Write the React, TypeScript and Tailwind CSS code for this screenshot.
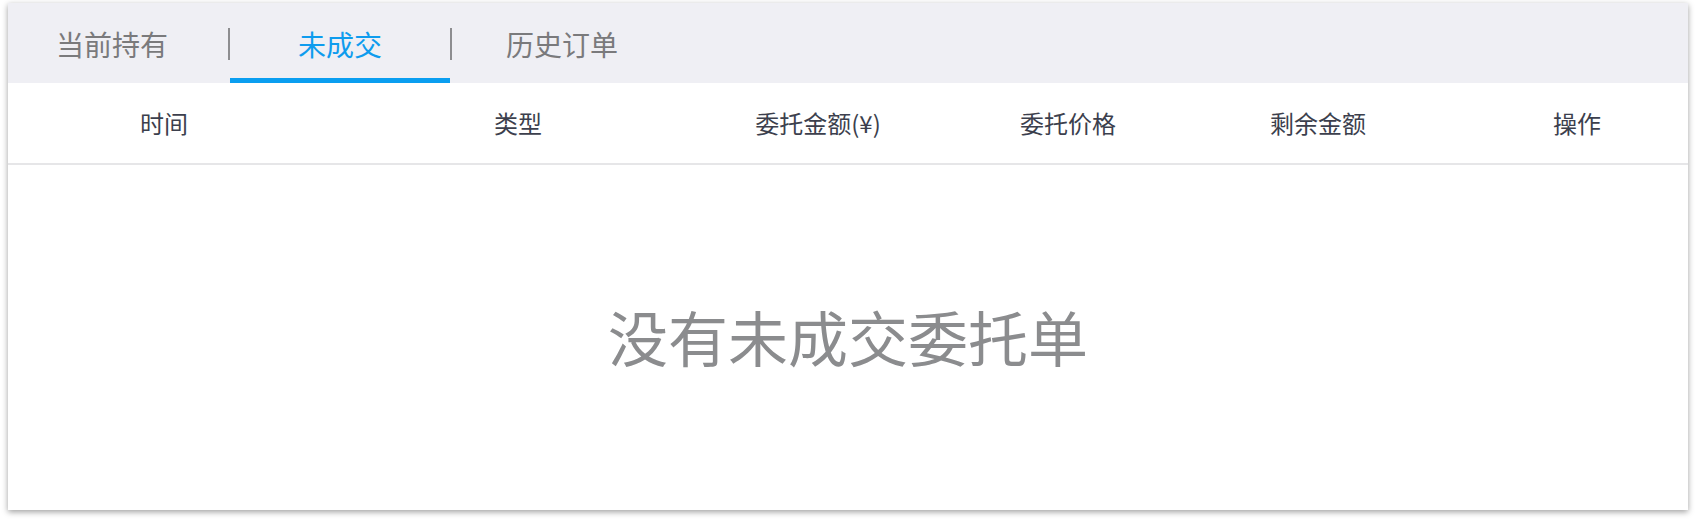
import React from "react";

const FONT = "font-['Noto_Sans_CJK_SC','Noto_Sans',sans-serif]";

export default function App() {
  const tabs = ["当前持有", "未成交", "历史订单"];
  const active = 1;
  return (
    <div className={`w-[1696px] h-[522px] bg-white pt-[3px] pl-[8px] ${FONT}`}>
      <div className="w-[1680px] h-[507px] bg-white flex flex-col shadow-[0_2px_6px_rgba(0,0,0,0.38)]">
        {/* Tab bar */}
        <div className="h-[80px] bg-[#efeff4] flex items-stretch shrink-0">
          {tabs.map((t, i) => (
            <React.Fragment key={t}>
              {i > 0 && <div className="w-[2px] h-[32px] self-center mt-[2px] bg-[#8d8d90]" />}
              <div
                className={`w-[220px] relative flex items-center justify-center text-[28px] leading-none pt-[2px] ${
                  i === 0 ? "pr-[12px]" : ""
                } ${i === active ? "text-[#0e9cee]" : "text-[#7a7a7c]"}`}
              >
                {t}
                {i === active && <div className="absolute left-0 right-0 bottom-0 h-[5px] bg-[#0a9ef0]" />}
              </div>
            </React.Fragment>
          ))}
        </div>
        {/* Header */}
        <div className="h-[82px] shrink-0 border-b-2 border-[#e6e6e8] grid grid-cols-[312px_396px_204px_296px_204px_268px] items-center text-[24px] leading-none text-[#3c3f4d]">
          <div className="text-center">时间</div>
          <div className="text-center">类型</div>
          <div className="text-center">委托金额(¥)</div>
          <div className="text-center">委托价格</div>
          <div className="text-center">剩余金额</div>
          <div className="text-center pl-[46px]">操作</div>
        </div>
        {/* Empty */}
        <div className="flex-1 flex items-center justify-center pb-[4px] text-[60px] leading-none text-[#8b8c8e]">
          没有未成交委托单
        </div>
      </div>
    </div>
  );
}
